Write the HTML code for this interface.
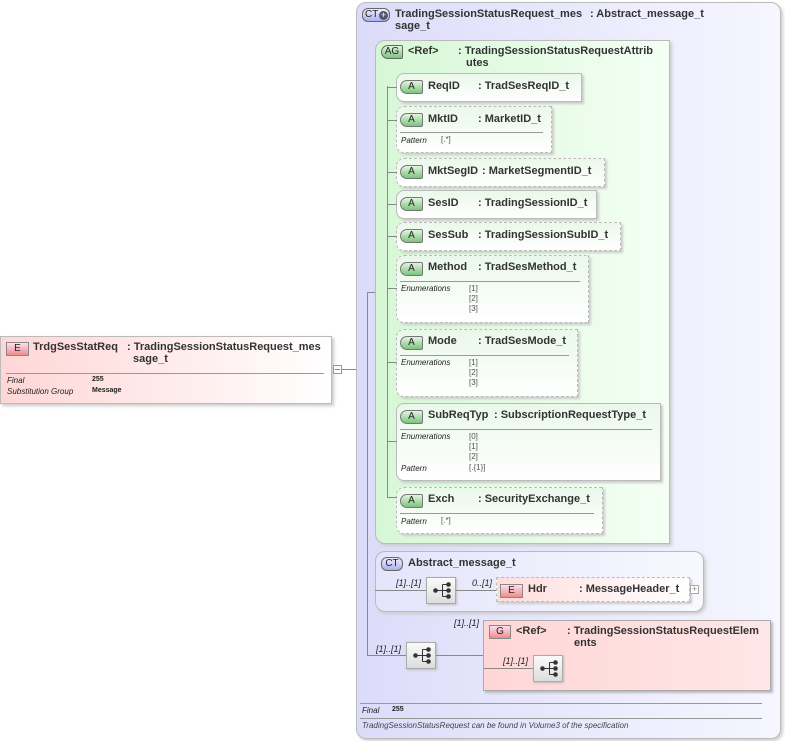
<!DOCTYPE html>
<html><head><meta charset="utf-8"><style>
*{margin:0;padding:0;box-sizing:border-box}
body{width:785px;height:741px;background:#fff;position:relative;overflow:hidden;font-family:"Liberation Sans",sans-serif;color:#222}
.a{position:absolute}
.t{position:absolute;font-size:11px;font-weight:bold;white-space:nowrap;line-height:12px;color:#333}
.s{position:absolute;font-size:8px;white-space:nowrap;line-height:10px;color:#222}
.i{font-style:italic}
.sm{position:absolute;font-size:8px;white-space:nowrap;color:#555;line-height:10px}
.hl{position:absolute;height:1px;background:#888}
.vl{position:absolute;width:1px;background:#888}
.attr{position:absolute;background:linear-gradient(#eaf8ea,#fff);box-shadow:2px 2px 2px #ccc;border-radius:8px 0 0 8px}
.solid{border:1px solid #bbb}
.dash{border:1.5px dashed #bbb}
.ab{position:absolute;width:23px;height:14px;border:1px solid #777;border-radius:7px 2px 2px 7px;background:linear-gradient(#e0f5e0,#7cc47c);font-size:10px;text-align:center;line-height:12px;color:#222}
.eb{position:absolute;width:23px;height:14px;border:1px solid #888;background:linear-gradient(#fde,#f08c8c);font-size:10px;text-align:center;line-height:12px}
.seq{position:absolute;width:30px;height:27px;border:1px solid #aaa;background:linear-gradient(#fafafa,#ddd);box-shadow:1px 1px 2px #bbb}
</style></head><body>

<!-- Element box -->
<div class="a" style="left:0;top:336px;width:332px;height:68px;border:1px solid #bbb;background:linear-gradient(90deg,#ffd6d6,#fff);box-shadow:2px 2px 3px #ccc"></div>
<div class="eb" style="left:6px;top:342px">E</div>
<div class="t" style="left:33px;top:341px">TrdgSesStatReq</div>
<div class="t" style="left:127px;top:341px">: TradingSessionStatusRequest_mes</div>
<div class="t" style="left:133px;top:353px">sage_t</div>
<div class="hl" style="left:6px;top:373px;width:318px;background:#999"></div>
<div class="s i" style="left:7px;top:376px">Final</div>
<div class="s" style="left:92px;top:375px;font-weight:bold;font-size:7px">255</div>
<div class="s i" style="left:7px;top:387px">Substitution Group</div>
<div class="s" style="left:92px;top:386px;font-weight:bold;font-size:7px">Message</div>
<div class="a" style="left:333px;top:365px;width:9px;height:9px;border:1px solid #999;background:#fff"></div>
<div class="hl" style="left:335px;top:369px;width:5px"></div>
<div class="hl" style="left:342px;top:369px;width:26px"></div>

<!-- Outer CT -->
<div class="a" style="left:356px;top:2px;width:425px;height:737px;border:1px solid #bbb;border-radius:10px;background:linear-gradient(90deg,#dcdcfa,#f6f6ff);box-shadow:2px 2px 3px #ccc"></div>
<div class="a" style="left:362px;top:8px;width:28px;height:14px;border:1px solid #666;border-radius:6px;background:linear-gradient(#eef,#aab0ee);font-size:10px;line-height:12px;padding-left:2px;white-space:nowrap">CT<span style="position:absolute;left:16px;top:2px;width:9px;height:9px;border-radius:50%;background:#556;color:#fff;font-size:9px;line-height:9px;text-align:center">+</span></div>
<div class="t" style="left:395px;top:8px">TradingSessionStatusRequest_mes</div>
<div class="t" style="left:590px;top:8px">: Abstract_message_t</div>
<div class="t" style="left:395px;top:20px">sage_t</div>

<div class="vl" style="left:367px;top:292px;height:364px"></div>
<div class="hl" style="left:367px;top:292px;width:9px"></div>

<!-- AG box -->
<div class="a" style="left:375px;top:40px;width:295px;height:504px;border:1px solid #bbb;background:linear-gradient(90deg,#d6f7d6,#f4fff4);border-radius:10px 0 0 10px;box-shadow:2px 2px 3px #ccc"></div>
<div class="a" style="left:381px;top:45px;width:22px;height:14px;border:1px solid #666;border-radius:7px 2px 2px 7px;background:linear-gradient(#e0f5e0,#7cc47c);font-size:10px;line-height:12px;text-align:center">AG</div>
<div class="t" style="left:408px;top:45px">&lt;Ref&gt;</div>
<div class="t" style="left:458px;top:45px">: TradingSessionStatusRequestAttrib</div>
<div class="t" style="left:466px;top:57px">utes</div>

<div class="vl" style="left:387px;top:86px;height:412px"></div>

<!-- attributes -->
<div class="attr solid" style="left:396px;top:73px;width:186px;height:29px"></div>
<div class="ab" style="left:400px;top:80px">A</div><div class="t" style="left:428px;top:80px">ReqID</div><div class="t" style="left:478px;top:80px">: TradSesReqID_t</div>
<div class="hl" style="left:387px;top:87px;width:10px"></div>

<div class="attr dash" style="left:396px;top:106px;width:156px;height:47px"></div>
<div class="ab" style="left:400px;top:113px">A</div><div class="t" style="left:428px;top:113px">MktID</div><div class="t" style="left:478px;top:113px">: MarketID_t</div>
<div class="hl" style="left:400px;top:132px;width:143px;background:#999"></div>
<div class="s i" style="left:401px;top:136px">Pattern</div><div class="sm" style="left:441px;top:135px">[.*]</div>
<div class="hl" style="left:387px;top:120px;width:10px"></div>

<div class="attr dash" style="left:396px;top:158px;width:209px;height:29px"></div>
<div class="ab" style="left:400px;top:165px">A</div><div class="t" style="left:428px;top:165px">MktSegID</div><div class="t" style="left:482px;top:165px">: MarketSegmentID_t</div>
<div class="hl" style="left:387px;top:172px;width:10px"></div>

<div class="attr solid" style="left:396px;top:190px;width:201px;height:29px"></div>
<div class="ab" style="left:400px;top:197px">A</div><div class="t" style="left:428px;top:197px">SesID</div><div class="t" style="left:478px;top:197px">: TradingSessionID_t</div>
<div class="hl" style="left:387px;top:204px;width:10px"></div>

<div class="attr dash" style="left:396px;top:222px;width:225px;height:29px"></div>
<div class="ab" style="left:400px;top:229px">A</div><div class="t" style="left:428px;top:229px">SesSub</div><div class="t" style="left:478px;top:229px">: TradingSessionSubID_t</div>
<div class="hl" style="left:387px;top:236px;width:10px"></div>

<div class="attr dash" style="left:396px;top:255px;width:193px;height:68px"></div>
<div class="ab" style="left:400px;top:262px">A</div><div class="t" style="left:428px;top:261px">Method</div><div class="t" style="left:478px;top:261px">: TradSesMethod_t</div>
<div class="hl" style="left:400px;top:281px;width:180px;background:#999"></div>
<div class="s i" style="left:401px;top:284px">Enumerations</div>
<div class="sm" style="left:469px;top:284px">[1]</div><div class="sm" style="left:469px;top:294px">[2]</div><div class="sm" style="left:469px;top:304px">[3]</div>
<div class="hl" style="left:387px;top:288px;width:10px"></div>

<div class="attr dash" style="left:396px;top:329px;width:182px;height:68px"></div>
<div class="ab" style="left:400px;top:336px">A</div><div class="t" style="left:428px;top:335px">Mode</div><div class="t" style="left:478px;top:335px">: TradSesMode_t</div>
<div class="hl" style="left:400px;top:355px;width:169px;background:#999"></div>
<div class="s i" style="left:401px;top:358px">Enumerations</div>
<div class="sm" style="left:469px;top:358px">[1]</div><div class="sm" style="left:469px;top:368px">[2]</div><div class="sm" style="left:469px;top:378px">[3]</div>
<div class="hl" style="left:387px;top:362px;width:10px"></div>

<div class="attr solid" style="left:396px;top:403px;width:265px;height:78px"></div>
<div class="ab" style="left:400px;top:410px">A</div><div class="t" style="left:428px;top:409px">SubReqTyp</div><div class="t" style="left:494px;top:409px">: SubscriptionRequestType_t</div>
<div class="hl" style="left:400px;top:429px;width:252px;background:#999"></div>
<div class="s i" style="left:401px;top:432px">Enumerations</div>
<div class="sm" style="left:469px;top:432px">[0]</div><div class="sm" style="left:469px;top:442px">[1]</div><div class="sm" style="left:469px;top:452px">[2]</div>
<div class="s i" style="left:401px;top:464px">Pattern</div><div class="sm" style="left:469px;top:463px">[.{1}]</div>
<div class="hl" style="left:387px;top:441px;width:10px"></div>

<div class="attr dash" style="left:396px;top:487px;width:207px;height:47px"></div>
<div class="ab" style="left:400px;top:494px">A</div><div class="t" style="left:428px;top:493px">Exch</div><div class="t" style="left:478px;top:493px">: SecurityExchange_t</div>
<div class="hl" style="left:400px;top:513px;width:194px;background:#999"></div>
<div class="s i" style="left:401px;top:517px">Pattern</div><div class="sm" style="left:441px;top:516px">[.*]</div>
<div class="hl" style="left:387px;top:497px;width:10px"></div>

<!-- Abstract_message_t -->
<div class="a" style="left:375px;top:551px;width:329px;height:61px;border:1px solid #bbb;border-radius:10px;background:linear-gradient(90deg,#e4e4fb,#f8f8ff);box-shadow:2px 2px 3px #ccc"></div>
<div class="a" style="left:381px;top:557px;width:22px;height:14px;border:1px solid #666;border-radius:6px;background:linear-gradient(#eef,#aab0ee);font-size:10px;line-height:12px;text-align:center">CT</div>
<div class="t" style="left:408px;top:557px">Abstract_message_t</div>
<div class="hl" style="left:375px;top:590px;width:52px"></div>
<div class="s i" style="left:396px;top:578px;font-size:9px">[1]..[1]</div>
<div class="seq" style="left:426px;top:577px"><svg width="28" height="25" style="position:absolute;left:0;top:0"><circle cx="8.5" cy="12.5" r="2.3" fill="#333"/><path d="M9 12.5H15.5M15.5 6.5V18.5M15.5 6.5H21M15.5 12.5H21M15.5 18.5H21" stroke="#333" stroke-width="1" fill="none"/><circle cx="21.5" cy="6.5" r="2.3" fill="#333"/><circle cx="21.5" cy="12.5" r="2.3" fill="#333"/><circle cx="21.5" cy="18.5" r="2.3" fill="#333"/></svg></div>
<div class="hl" style="left:456px;top:590px;width:40px"></div>
<div class="s i" style="left:472px;top:578px;font-size:9px">0..[1]</div>
<div class="a" style="left:496px;top:577px;width:194px;height:25px;border:1.5px dashed #bbb;background:linear-gradient(90deg,#ffdcdc,#fff);box-shadow:2px 2px 2px #ccc"></div>
<div class="eb" style="left:500px;top:584px">E</div>
<div class="t" style="left:528px;top:583px">Hdr</div><div class="t" style="left:579px;top:583px">: MessageHeader_t</div>
<div class="a" style="left:690px;top:585px;width:9px;height:9px;border:1px solid #aaa;background:#fff;font-size:9px;line-height:7px;text-align:center;color:#888">+</div>

<!-- outer sequence -->
<div class="hl" style="left:367px;top:655px;width:40px"></div>
<div class="s i" style="left:376px;top:644px;font-size:9px">[1]..[1]</div>
<div class="seq" style="left:406px;top:642px"><svg width="28" height="25" style="position:absolute;left:0;top:0"><circle cx="8.5" cy="12.5" r="2.3" fill="#333"/><path d="M9 12.5H15.5M15.5 6.5V18.5M15.5 6.5H21M15.5 12.5H21M15.5 18.5H21" stroke="#333" stroke-width="1" fill="none"/><circle cx="21.5" cy="6.5" r="2.3" fill="#333"/><circle cx="21.5" cy="12.5" r="2.3" fill="#333"/><circle cx="21.5" cy="18.5" r="2.3" fill="#333"/></svg></div>
<div class="hl" style="left:436px;top:655px;width:48px"></div>
<div class="s i" style="left:454px;top:618px;font-size:9px">[1]..[1]</div>

<!-- G box -->
<div class="a" style="left:483px;top:620px;width:288px;height:71px;border:1px solid #aaa;background:linear-gradient(90deg,#ffd6d6,#ffe6e6);box-shadow:2px 2px 2px #bbb"></div>
<div class="eb" style="left:489px;top:625px;width:22px">G</div>
<div class="t" style="left:516px;top:625px">&lt;Ref&gt;</div>
<div class="t" style="left:567px;top:625px">: TradingSessionStatusRequestElem</div>
<div class="t" style="left:574px;top:637px">ents</div>
<div class="hl" style="left:484px;top:668px;width:50px"></div>
<div class="s i" style="left:503px;top:656px;font-size:9px">[1]..[1]</div>
<div class="seq" style="left:533px;top:655px"><svg width="28" height="25" style="position:absolute;left:0;top:0"><circle cx="8.5" cy="12.5" r="2.3" fill="#333"/><path d="M9 12.5H15.5M15.5 6.5V18.5M15.5 6.5H21M15.5 12.5H21M15.5 18.5H21" stroke="#333" stroke-width="1" fill="none"/><circle cx="21.5" cy="6.5" r="2.3" fill="#333"/><circle cx="21.5" cy="12.5" r="2.3" fill="#333"/><circle cx="21.5" cy="18.5" r="2.3" fill="#333"/></svg></div>

<!-- footer -->
<div class="hl" style="left:360px;top:703px;width:402px;background:#999"></div>
<div class="s i" style="left:362px;top:706px">Final</div>
<div class="s" style="left:392px;top:705px;font-weight:bold;font-size:7px">255</div>
<div class="hl" style="left:360px;top:718px;width:402px;background:#999"></div>
<div class="s i" style="left:362px;top:721px;color:#444">TradingSessionStatusRequest can be found in Volume3 of the specification</div>
</body></html>
